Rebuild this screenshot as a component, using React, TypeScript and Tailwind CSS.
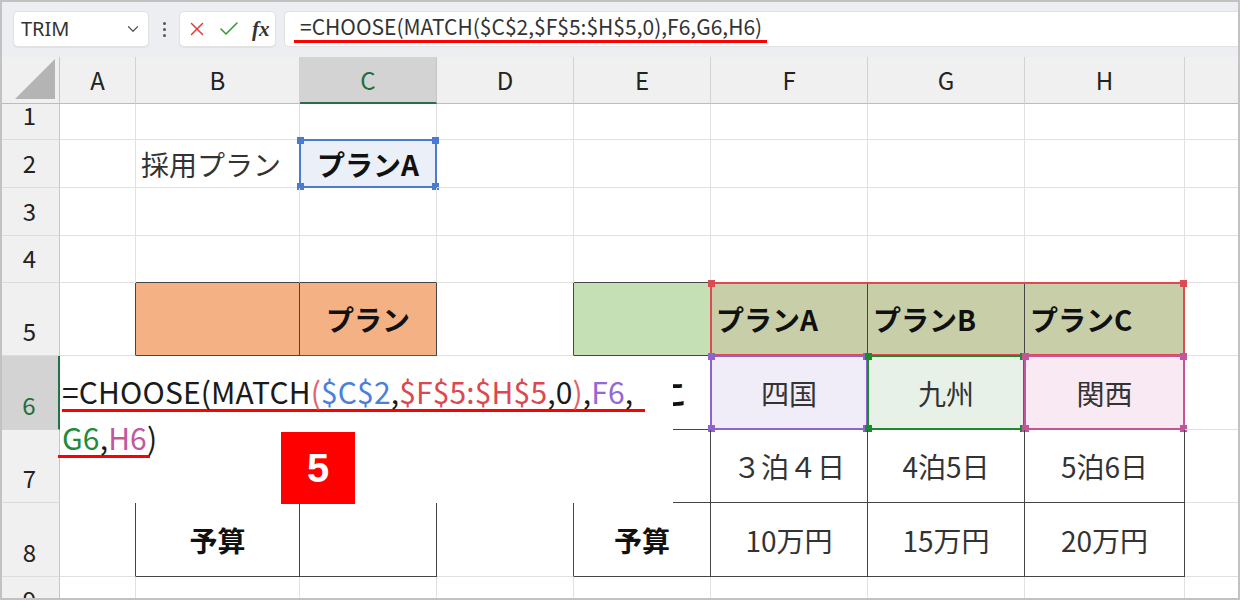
import React from "react";
import { ChevronDown, X, Check } from "lucide-react";

const FONT = "font-['Noto_Sans_CJK_JP','Noto_Sans',sans-serif]";

const COLS = ["A", "B", "C", "D", "E", "F", "G", "H", ""];

const bordered = new Set([
  "5-2", "5-3", "5-5", "5-6", "5-7", "5-8",
  "6-5", "6-6", "6-7", "6-8",
  "7-6", "7-7", "7-8",
  "8-2", "8-3", "8-5", "8-6", "8-7", "8-8",
]);
const isB = (r: number, c: number) => bordered.has(`${r}-${c}`);

type CellDef = {
  text?: React.ReactNode;
  cls?: string;
  overlay?: React.ReactNode;
};

function Handles({ color }: { color: string }) {
  const base = "absolute w-[7px] h-[7px]";
  return (
    <>
      <span className={`${base} -left-[4px] -top-[4px] ${color}`} />
      <span className={`${base} -right-[4px] -top-[4px] ${color}`} />
      <span className={`${base} -left-[4px] -bottom-[4px] ${color}`} />
      <span className={`${base} -right-[4px] -bottom-[4px] ${color}`} />
    </>
  );
}

const cells: Record<string, CellDef> = {
  "2-2": { text: "採用プラン", cls: "justify-start pl-[5px] text-[#333]" },
  "2-3": {
    text: "プランA",
    cls: "justify-center font-bold bg-[#eaeff8] text-[#111]",
    overlay: (
      <div className="absolute -inset-px border-2 border-[#4a7bd0] pointer-events-none">
        <Handles color="bg-[#4a7bd0]" />
      </div>
    ),
  },
  "5-2": { cls: "bg-[#f4b183]" },
  "5-3": { text: "プラン", cls: "justify-center font-bold bg-[#f4b183] text-[#111]" },
  "5-5": { cls: "bg-[#c5e0b4]" },
  "5-6": {
    text: "プランA",
    cls: "justify-start pl-[5px] font-bold bg-[#c8cea8] text-[#111]",
    overlay: (
      <div className="absolute -inset-px border-t-2 border-b-2 border-l-2 border-[#dc4a52] pointer-events-none">
        <span className="absolute w-[7px] h-[7px] -left-[4px] -top-[4px] bg-[#dc4a52]" />
      </div>
    ),
  },
  "5-7": {
    text: "プランB",
    cls: "justify-start pl-[5px] font-bold bg-[#c8cea8] text-[#111]",
    overlay: <div className="absolute -inset-px border-t-2 border-b-2 border-[#dc4a52] pointer-events-none" />,
  },
  "5-8": {
    text: "プランC",
    cls: "justify-start pl-[5px] font-bold bg-[#c8cea8] text-[#111]",
    overlay: (
      <div className="absolute -inset-px border-t-2 border-b-2 border-r-2 border-[#dc4a52] pointer-events-none">
        <span className="absolute w-[7px] h-[7px] -right-[4px] -top-[4px] bg-[#dc4a52]" />
      </div>
    ),
  },
  "6-5": { text: "こ", cls: "justify-end pr-[22px] font-bold text-[#111]" },
  "6-6": {
    text: "四国",
    cls: "justify-center bg-[#f0ecf8] text-[#333]",
    overlay: (
      <div className="absolute -inset-px border-2 border-[#8f63cf] pointer-events-none">
        <Handles color="bg-[#8f63cf]" />
      </div>
    ),
  },
  "6-7": {
    text: "九州",
    cls: "justify-center bg-[#e7f1e8] text-[#333]",
    overlay: (
      <div className="absolute -inset-px border-2 border-[#1d8a2e] pointer-events-none">
        <Handles color="bg-[#1d8a2e]" />
      </div>
    ),
  },
  "6-8": {
    text: "関西",
    cls: "justify-center bg-[#f8e9f3] text-[#333]",
    overlay: (
      <div className="absolute -inset-px border-2 border-[#c4549c] pointer-events-none">
        <Handles color="bg-[#c4549c]" />
      </div>
    ),
  },
  "7-6": { text: "３泊４日", cls: "justify-center text-[#333]" },
  "7-7": { text: "4泊5日", cls: "justify-center text-[#333]" },
  "7-8": { text: "5泊6日", cls: "justify-center text-[#333]" },
  "8-2": { text: "予算", cls: "justify-center font-bold text-[#111]" },
  "8-5": { text: "予算", cls: "justify-center font-bold text-[#111]" },
  "8-6": { text: "10万円", cls: "justify-center text-[#333]" },
  "8-7": { text: "15万円", cls: "justify-center text-[#333]" },
  "8-8": { text: "20万円", cls: "justify-center text-[#333]" },
};

function Toolbar() {
  return (
    <div className="h-[57px] bg-[#eceef1] flex items-start pt-[11px] pl-[13px]">
      <div className="w-[136px] h-[36px] bg-white rounded-[5px] border border-[#e2e2e2] shadow-[0_1px_1px_rgba(0,0,0,0.06)] flex items-center justify-between pl-[7px] pr-[6px]">
        <span className="text-[20px] text-[#333] font-['Noto_Sans','Liberation_Sans',sans-serif]">TRIM</span>
        <ChevronDown size={18} strokeWidth={1.6} color="#555" />
      </div>
      <div className="w-[30px] h-[36px] flex flex-col items-center justify-center gap-[3px]">
        <span className="w-[3px] h-[3px] rounded-full bg-[#555]" />
        <span className="w-[3px] h-[3px] rounded-full bg-[#555]" />
        <span className="w-[3px] h-[3px] rounded-full bg-[#555]" />
      </div>
      <div className="w-[97px] h-[36px] bg-white rounded-[5px] border border-[#e2e2e2] shadow-[0_1px_1px_rgba(0,0,0,0.06)] flex items-center pl-[6px] gap-[9px]">
        <X size={22} strokeWidth={1.6} color="#e53935" />
        <Check size={24} strokeWidth={1.6} color="#3a9a3a" />
        <span className="text-[21px] italic font-bold text-[#333] font-['Liberation_Serif','DejaVu_Serif',serif] leading-none ml-[2px]">fx</span>
      </div>
      <div className="ml-[8px] flex-1 h-[36px] bg-white rounded-l-[5px] border border-r-0 border-[#e2e2e2] flex flex-col pl-[9px]">
        <span className={`${FONT} text-[21px] leading-[29px] text-[#333] tracking-[0px] pl-[6px]`}>
          =CHOOSE(MATCH($C$2,$F$5:$H$5,0),F6,G6,H6)
        </span>
        <span className="block w-[473px] h-[3px] bg-[#ff0000] -mt-[1px]" />
      </div>
    </div>
  );
}

function Sheet() {
  const rowHeights = [47, 36, 48, 48, 47, 73, 74, 73, 74, 47];
  const out: React.ReactNode[] = [];
  rowHeights.forEach((h, r) => {
    for (let c = 0; c < 10; c++) {
      const key = `${r}-${c}`;
      if (r === 0 && c === 0) {
        out.push(
          <div key={key} className="bg-[#f0f0f0] border-r border-b border-r-[#c6c6c6] border-b-[#bdbdbd] flex items-end justify-end p-[4px]">
            <svg width="40" height="40" viewBox="0 0 40 40">
              <polygon points="40,0 40,40 0,40" fill="#b4b4b4" />
            </svg>
          </div>
        );
      } else if (r === 0) {
        const active = c === 3;
        out.push(
          <div
            key={key}
            className={
              active
                ? "bg-[#d3d3d3] border-r border-r-[#c6c6c6] border-b-2 border-b-[#217346] flex items-center justify-center text-[24px] text-[#1f6e3f]"
                : "bg-[#f0f0f0] border-r border-r-[#d2d2d2] border-b border-b-[#bdbdbd] flex items-center justify-center text-[24px] text-[#222]"
            }
          >
            {COLS[c - 1]}
          </div>
        );
      } else if (c === 0) {
        const active = r === 6;
        out.push(
          <div
            key={key}
            className={
              active
                ? "bg-[#d3d3d3] border-r-2 border-r-[#217346] border-b border-b-[#d6d6d6] flex items-end justify-center overflow-hidden pb-[9px] text-[24px] text-[#1f6e3f]"
                : "bg-[#f0f0f0] border-r border-r-[#c6c6c6] border-b border-b-[#dcdcdc] flex items-end justify-center overflow-hidden pb-[9px] text-[24px] text-[#222]"
            }
          >
            <span className="leading-[30px] block">{r}</span>
          </div>
        );
      } else {
        const def = cells[`${r}-${c}`] || {};
        const rightDark = isB(r, c) || isB(r, c + 1);
        const bottomDark = isB(r, c) || isB(r + 1, c);
        const rc = rightDark ? "border-r-[#454545]" : "border-r-[#e1e1e1]";
        const bc =
          r === 5 && c === 3
            ? "border-b-[#217346]"
            : bottomDark
            ? "border-b-[#454545]"
            : "border-b-[#e1e1e1]";
        out.push(
          <div
            key={key}
            className={`relative border-r border-b ${rc} ${bc} flex items-center text-[28px] whitespace-nowrap ${def.cls || ""}`}
          >
            {def.text}
            {def.overlay}
          </div>
        );
      }
    }
  });
  return (
    <div className="relative">
      <div className="grid grid-cols-[60px_76px_164px_137px_137px_137px_157px_157px_160px_55px] grid-rows-[47px_36px_48px_48px_47px_73px_74px_73px_74px_47px]">
        {out}
      </div>
      {/* in-cell formula editor */}
      <div className="absolute left-[60px] top-[299px] w-[613px] h-[147px] bg-white pl-[2px] pt-[16px]">
        <div className={`${FONT} text-[30px] leading-[38px] tracking-[0.15px] text-[#1a1a1a] whitespace-nowrap`}>
          =CHOOSE(MATCH<span className="text-[#e0666b]">(</span>
          <span className="text-[#4a80dc]">$C$2</span>,
          <span className="text-[#dc4750]">$F$5:$H$5</span>,0
          <span className="text-[#e0666b]">)</span>,
          <span className="text-[#9468d6]">F6</span>,
        </div>
        <div className="w-[583px] h-[3px] bg-[#ff0000] -mt-[1px]" />
        <div className={`${FONT} text-[30px] leading-[38px] tracking-[0.15px] text-[#1a1a1a] whitespace-nowrap mt-[6px]`}>
          <span className="text-[#1f8c3c]">G6</span>,<span className="text-[#c2579e]">H6</span>)
        </div>
        <div className="-ml-[4px] w-[92px] h-[3px] bg-[#ff0000] -mt-[1px]" />
      </div>
      {/* step badge */}
      <div className="absolute left-[281px] top-[375px] w-[74px] h-[72px] bg-[#ff0000] flex items-center justify-center">
        <span className="text-white text-[40px] font-bold font-['Liberation_Sans','Noto_Sans',sans-serif] leading-none">5</span>
      </div>
    </div>
  );
}

export default function App() {
  return (
    <div className={`relative w-[1240px] h-[600px] overflow-hidden bg-white ${FONT}`}>
      <Toolbar />
      <Sheet />
      <div className="absolute inset-0 border-2 border-[#c2c2c2] pointer-events-none" />
    </div>
  );
}
